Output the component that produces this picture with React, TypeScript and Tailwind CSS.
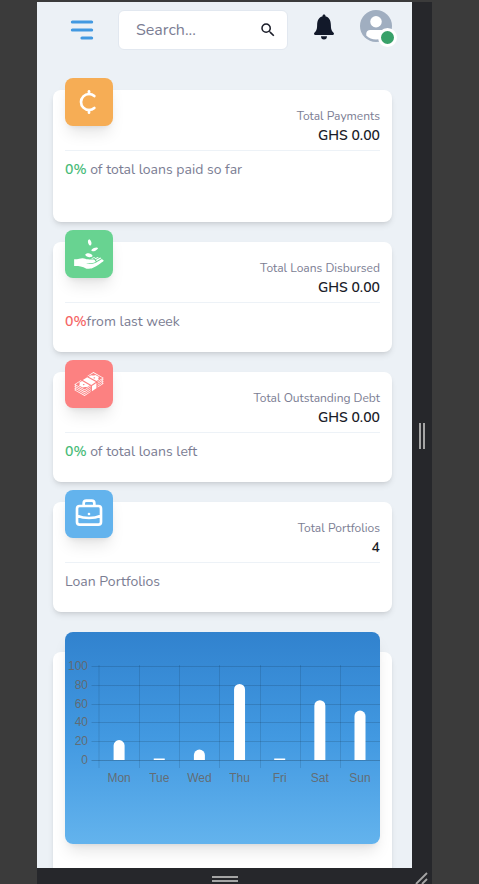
import type { ReactNode } from "react";
import { HiMenuAlt3, HiOutlineBriefcase } from "react-icons/hi";
import { MdSearch } from "react-icons/md";
import { IoIosNotifications } from "react-icons/io";
import { TbCurrencyCent } from "react-icons/tb";
import { GiReceiveMoney, GiMoneyStack } from "react-icons/gi";

const days = ["Mon", "Tue", "Wed", "Thu", "Fri", "Sat", "Sun"];
const values = [21, 1, 11, 80, 1, 63, 52];
const ticks = [100, 80, 60, 40, 20, 0];

function Avatar() {
  return (
    <div className="relative size-8 rounded-full bg-[#a0aec0]">
      <svg viewBox="0 0 128 128" className="size-8 fill-white">
        <path d="M103,102.1388 C93.094,111.92 79.3504,118 64.1638,118 C48.8056,118 34.9294,111.768 25,101.7892 L25,95.2 C25,86.8096 31.981,80 40.6,80 L87.4,80 C96.019,80 103,86.8096 103,95.2 L103,102.1388 Z" />
        <circle cx="64" cy="47" r="23" />
      </svg>
      <span className="absolute -right-[5px] -bottom-[5px] size-[19px] rounded-full border-3 border-white bg-[#38a169]" />
    </div>
  );
}

interface StatProps {
  icon: ReactNode;
  color: string;
  label: string;
  value: string;
  height: string;
  children: ReactNode;
}

function StatCard({ icon, color, label, value, height, children }: StatProps) {
  return (
    <section className={`relative rounded-lg bg-white px-3 shadow-md ${height}`}>
      <div className={`absolute -top-3 left-3 flex size-12 items-center justify-center rounded-lg text-white shadow-lg ${color}`}>
        {icon}
      </div>
      <div className="flex h-[61px] flex-col items-end border-b border-[#edf2f7] pt-[17px]">
        <span className="text-[12px] leading-[18px] text-[#7b7d93]">{label}</span>
        <span className="mt-px text-[14px] leading-5 font-semibold text-[#1a1c28]">{value}</span>
      </div>
      <p className="pt-2 text-[14px] leading-[21px] text-[#7b7d93]">{children}</p>
    </section>
  );
}

function Chart() {
  return (
    <svg viewBox="0 0 315 212" className="block h-[212px] w-[315px] font-['Liberation_Sans',Arial,sans-serif]">
      {ticks.map((t, i) => (
        <g key={t}>
          <line x1="26.5" x2="315" y1={Math.round(34 + i * 18.8) + 0.5} y2={Math.round(34 + i * 18.8) + 0.5} stroke="#000" strokeOpacity={t === 0 ? 0.2 : 0.13} />
          <text x="23" y={38 + i * 18.8} textAnchor="end" fontSize="12" fill="#666" fillOpacity="0.9">{t}</text>
        </g>
      ))}
      {days.map((d, i) => {
        const left = 34 + i * 40.15;
        const h = values[i] * 0.95;
        const r = Math.min(5.5, h);
        const x = left + 14.6;
        return (
          <g key={d}>
            <line x1={Math.round(left) + (i === 0 ? 0 : 0.5)} x2={Math.round(left) + (i === 0 ? 0 : 0.5)} y1="33" y2="136" stroke="#000" strokeOpacity="0.11" />
            <path d={h < 2 ? `M${x} 128v-1.5h11v1.5z` : `M${x} 128v${r - h}a5.5 ${r} 0 0 1 11 0v${h - r}z`} fill="white" />
            <text x={left + 20.1} y="149.5" textAnchor="middle" fontSize="12" fill="#666" fillOpacity="0.9">{d}</text>
          </g>
        );
      })}
    </svg>
  );
}

export default function App() {
  return (
    <div className="flex h-[884px] w-[479px] overflow-hidden bg-[#3b3b3b] pt-0.5 pl-[37px] font-['Nunito','Open_Sans',sans-serif]">
      <div className="flex w-[395px] flex-col bg-[#26272b]">
        <div className="flex h-[866px]">
          <main className="h-full w-[375px] overflow-hidden bg-[#ecf1f6]">
            <header className="flex h-14 items-center pl-[29px]">
              <HiMenuAlt3 className="size-8 text-[#4299e1]" />
              <div className="ml-5 flex h-10 w-[170px] items-center justify-between rounded-md border border-[#e2e8f0] bg-white pr-2.5 pl-[17px] text-[16px] text-[#7b7d93]">
                <span>Search...</span>
                <MdSearch className="size-[18px] text-[#1a1c28]" />
              </div>
              <IoIosNotifications className="mb-[7px] ml-5 size-8 text-[#12192a]" />
              <div className="mb-2 ml-5">
                <Avatar />
              </div>
            </header>
            <div className="flex w-[371px] flex-col gap-5 px-4 pt-8">
              <StatCard icon={<TbCurrencyCent className="size-8" />} color="bg-[#f6ad55]" label="Total Payments" value="GHS 0.00" height="h-[132px]">
                <span className="font-semibold text-[#48bb78]">0%</span> of total loans paid so far
              </StatCard>
              <StatCard icon={<GiReceiveMoney className="size-8" />} color="bg-[#68d391]" label="Total Loans Disbursed" value="GHS 0.00" height="h-[110px]">
                <span className="font-semibold text-[#f56565]">0%</span>from last week
              </StatCard>
              <StatCard icon={<GiMoneyStack className="size-8" />} color="bg-[#fc8181]" label="Total Outstanding Debt" value="GHS 0.00" height="h-[110px]">
                <span className="font-semibold text-[#48bb78]">0%</span> of total loans left
              </StatCard>
              <StatCard icon={<HiOutlineBriefcase className="size-8" />} color="bg-[#63b3ed]" label="Total Portfolios" value="4" height="h-[110px]">
                Loan Portfolios
              </StatCard>
              <section className="mt-5 h-[260px] rounded-lg bg-white px-3 shadow-md">
                <div className="-mt-5 inline-block overflow-hidden rounded-lg bg-linear-to-b from-[#3182ce] via-[#4299e1] to-[#63b3ed] shadow-lg">
                  <Chart />
                </div>
              </section>
            </div>
          </main>
          <div className="flex flex-1 items-center justify-center gap-0.5 pt-0.5">
            <span className="h-[26px] w-0.5 bg-[#a5a5a5]" />
            <span className="h-[26px] w-0.5 bg-[#a5a5a5]" />
          </div>
        </div>
        <div className="flex h-4 items-center">
          <div className="flex w-[375px] flex-col items-center gap-0.5 pt-1.5">
            <span className="h-0.5 w-[26px] bg-[#a5a5a5]" />
            <span className="h-0.5 w-[26px] bg-[#a5a5a5]" />
          </div>
          <svg viewBox="0 0 20 16" className="h-4 w-5" stroke="#a5a5a5" strokeWidth="1.8">
            <path d="M4 16L15 5M10 16l5-5" />
          </svg>
        </div>
      </div>
    </div>
  );
}
